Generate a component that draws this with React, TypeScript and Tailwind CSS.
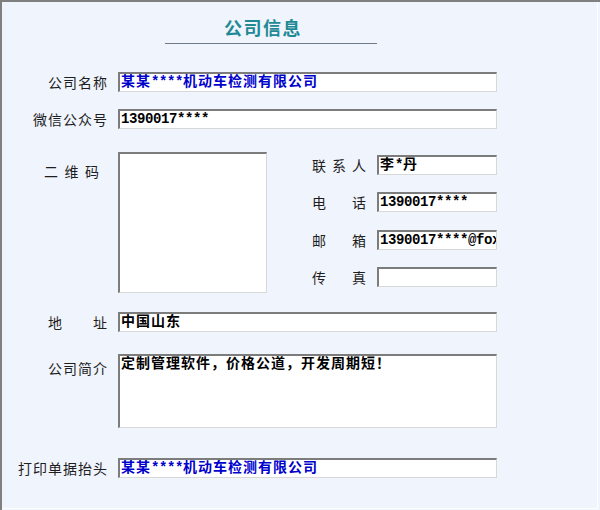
import React from "react";

const FIELD_FONT = "[font-family:'Liberation_Mono','Noto_Sans_CJK_SC',monospace]";

function runs(s: string) {
  const parts = s.match(/[\x00-\x7f]+|[^\x00-\x7f]+/g) || [];
  return parts.map((r, i) =>
    /^[\x00-\x7f]/.test(r) ? (
      <span key={i} className="tracking-[-0.4px]">
        {r}
      </span>
    ) : (
      <span key={i} className="tracking-[1px]">
        {r}
      </span>
    )
  );
}

function Field({
  value = "",
  blue = false,
  w,
  h = "h-[20px]",
}: {
  value?: string;
  blue?: boolean;
  w: string;
  h?: string;
}) {
  return (
    <div
      className={`${w} ${h} shrink-0 bg-white border-t-2 border-l-2 border-t-[#7c7c7c] border-l-[#7c7c7c] border-b border-r border-b-[#d8d8d8] border-r-[#d8d8d8] pl-px overflow-hidden whitespace-nowrap text-[14px] leading-[17px] font-bold ${FIELD_FONT} ${
        blue ? "text-[#0000cc]" : "text-black"
      }`}
    >
      {runs(value)}
    </div>
  );
}

function Label({ text }: { text: string }) {
  return (
    <div className="w-[116px] shrink-0 pr-[10px] text-right text-[14px] leading-[20px] tracking-[1px] text-[#1e1e1e] [font-family:'Noto_Sans_CJK_SC',sans-serif]">
      {text}
    </div>
  );
}

function Spread({ chars, w }: { chars: string[]; w: string }) {
  return (
    <div
      className={`${w} shrink-0 flex justify-between text-[14px] leading-[20px] text-[#1e1e1e] [font-family:'Noto_Sans_CJK_SC',sans-serif]`}
    >
      {chars.map((c, i) => (
        <span key={i}>{c}</span>
      ))}
    </div>
  );
}

export default function App() {
  return (
    <div className="w-[600px] h-[510px] bg-[#f0f4fc] border-t-2 border-l-2 border-[#808080] flex">
      <div className="flex-1 flex flex-col border-r border-b border-white mr-[2px] mb-[1px]">
        {/* Title */}
        <div className="mt-[13px] ml-[163px] w-[212px]">
          <div className="h-[24px] pl-[59px] text-[18px] leading-[24px] font-bold tracking-[1.5px] text-[#1f8a96] [font-family:'Noto_Sans_CJK_SC',sans-serif]">
            公司信息
          </div>
          <div className="mt-[4px] h-px bg-[#707b89]" />
        </div>

        {/* 公司名称 */}
        <div className="mt-[28px] flex items-center">
          <Label text="公司名称" />
          <Field w="w-[379px]" value="某某****机动车检测有限公司" blue />
        </div>

        {/* 微信公众号 */}
        <div className="mt-[17px] flex items-center">
          <Label text="微信公众号" />
          <Field w="w-[379px]" value="1390017****" />
        </div>

        {/* 二维码 + contacts */}
        <div className="mt-[23px] flex items-start">
          <div className="w-[116px] shrink-0 pl-[42px] pt-[9px]">
            <Spread chars={["二", "维", "码"]} w="w-[55px]" />
          </div>
          <div className="w-[149px] h-[141px] shrink-0 bg-white border-t-2 border-l-2 border-t-[#7c7c7c] border-l-[#7c7c7c] border-b border-r border-b-[#d8d8d8] border-r-[#d8d8d8]" />
          <div className="ml-[45px] pt-[3px] flex flex-col">
            <div className="flex items-center">
              <Spread chars={["联", "系", "人"]} w="w-[54px]" />
              <div className="ml-[11px]">
                <Field w="w-[120px]" value="李*丹" />
              </div>
            </div>
            <div className="mt-[17px] flex items-center">
              <Spread chars={["电", "话"]} w="w-[54px]" />
              <div className="ml-[11px]">
                <Field w="w-[120px]" value="1390017****" />
              </div>
            </div>
            <div className="mt-[18px] flex items-center">
              <Spread chars={["邮", "箱"]} w="w-[54px]" />
              <div className="ml-[11px]">
                <Field w="w-[120px]" value="1390017****@foxmail.com" />
              </div>
            </div>
            <div className="mt-[17px] flex items-center">
              <Spread chars={["传", "真"]} w="w-[54px]" />
              <div className="ml-[11px]">
                <Field w="w-[120px]" value="" />
              </div>
            </div>
          </div>
        </div>

        {/* 地址 */}
        <div className="mt-[19px] flex items-center">
          <div className="w-[116px] shrink-0 pl-[46px] pr-[11px]">
            <Spread chars={["地", "址"]} w="w-[59px]" />
          </div>
          <Field w="w-[379px]" value="中国山东" />
        </div>

        {/* 公司简介 */}
        <div className="mt-[22px] flex items-start">
          <div className="pt-[4px]">
            <Label text="公司简介" />
          </div>
          <Field
            w="w-[379px]"
            h="h-[74px]"
            value="定制管理软件，价格公道，开发周期短！"
          />
        </div>

        {/* 打印单据抬头 */}
        <div className="mt-[30px] flex items-center">
          <Label text="打印单据抬头" />
          <Field w="w-[379px]" value="某某****机动车检测有限公司" blue />
        </div>
      </div>
    </div>
  );
}
